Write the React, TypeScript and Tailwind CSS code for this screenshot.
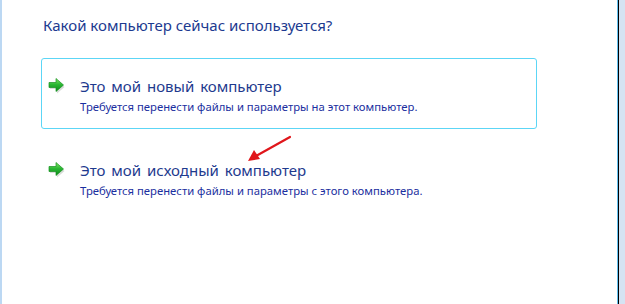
import React from "react";

function GreenArrow() {
  return (
    <svg width="19" height="16" viewBox="0 0 19 16" className="shrink-0">
      <defs>
        <linearGradient id="ga" x1="0" y1="0" x2="0" y2="1">
          <stop offset="0" stopColor="#8be86a" />
          <stop offset="0.45" stopColor="#2cb834" />
          <stop offset="1" stopColor="#0c8a1a" />
        </linearGradient>
      </defs>
      <path d="M2 7 L9 7 L9 2.5 L16.5 9 L9 15.5 L9 11 L2 11 Z" fill="#8f9a8f" opacity="0.35" />
      <path d="M1 4.5 L8 4.5 L8 0.5 L15.5 7 L8 13.5 L8 9.5 L1 9.5 Z" fill="url(#ga)" stroke="#159020" strokeWidth="0.7" strokeLinejoin="round" />
    </svg>
  );
}

function Option({ title, desc, boxed }: { title: string; desc: string; boxed?: boolean }) {
  return (
    <div
      className={
        "flex w-[496px] gap-[13px] rounded-[3px] pl-[6px] pt-[18px] pb-[14px] border " +
        (boxed ? "border-[#5cd6f6]" : "border-transparent")
      }
    >
      <div className="pt-[1px]">
        <GreenArrow />
      </div>
      <div className="flex flex-col">
        <div className="text-[15px] leading-[18px] [word-spacing:2px] text-[#1e3a8e]">{title}</div>
        <div className="mt-[5px] text-[11.3px] leading-[14px] text-[#1b2fa0]">{desc}</div>
      </div>
    </div>
  );
}

export default function App() {
  return (
    <div className="flex w-[625px] h-[304px] bg-white overflow-hidden" style={{ fontFamily: '"Noto Sans", "Open Sans", sans-serif' }}>
      <div className="w-[2px] bg-[#bcd8f3]" />
      <div className="relative flex-1 flex flex-col pl-[39px] pt-[15px]">
        <div className="pl-[2px] text-[15px] leading-[20px] text-[#1c3a90]">Какой компьютер сейчас используется?</div>
        <div className="mt-[23px] flex flex-col gap-[13px]">
          <Option boxed title="Это мой новый компьютер" desc="Требуется перенести файлы и параметры на этот компьютер." />
          <Option title="Это мой исходный компьютер" desc="Требуется перенести файлы и параметры с этого компьютера." />
        </div>
        <svg className="absolute left-[242px] top-[134px]" width="50" height="30" viewBox="0 0 50 30">
          <line x1="46" y1="3" x2="12" y2="22" stroke="#e0161b" strokeWidth="2.2" strokeLinecap="round" />
          <path d="M4 27 L10 16 L16 25 Z" fill="#e0161b" />
        </svg>
      </div>
      <div className="w-[1px] bg-[#62c0ee]" />
      <div className="w-[1px] bg-black" />
      <div className="w-[6px] bg-[#d5e3f3]" />
    </div>
  );
}
